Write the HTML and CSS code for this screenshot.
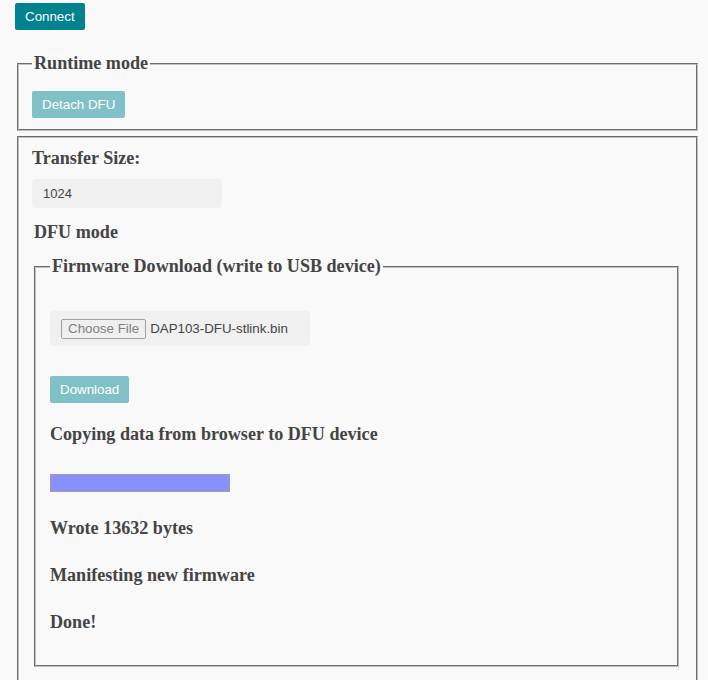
FILE: index.html
```html
<!DOCTYPE html>
<html>
<head>
<meta charset="utf-8">
<link rel="stylesheet" href="styles.css">
</head>
<body>
<button class="btn btn-primary">Connect</button>
<fieldset class="box box-runtime">
  <legend class="legend">Runtime mode</legend>
  <button class="btn btn-disabled">Detach DFU</button>
</fieldset>
<fieldset class="box box-main">
  <div class="label first">Transfer Size:</div>
  <input class="text-input" type="text" value="1024">
  <div class="label dfu">DFU mode</div>
  <fieldset class="box box-inner">
    <legend class="legend">Firmware Download (write to USB device)</legend>
    <div class="file-wrap">
      <span class="file-btn">Choose File</span>
      <span class="file-name">DAP103-DFU-stlink.bin</span>
    </div>
    <button class="btn btn-disabled btn-download">Download</button>
    <div class="label status">Copying data from browser to DFU device</div>
    <div class="progress"><div class="progress-fill"></div></div>
    <div class="label status2">Wrote 13632 bytes</div>
    <div class="label status3">Manifesting new firmware</div>
    <div class="label status3 last">Done!</div>
  </fieldset>
</fieldset>
</body>
</html>
```
FILE: styles.css
```css
html, body {
  background: #f9f9f9;
}
body {
  margin: 0;
  padding: 3px 10px 0 15px;
  font-family: "Liberation Serif", serif;
  color: #444;
}
.btn {
  display: block;
  height: 27px;
  padding: 0 10px;
  border: none;
  border-radius: 2px;
  font-family: "Liberation Sans", Arial, sans-serif;
  font-size: 13.333px;
  color: #fff;
  cursor: pointer;
}
.btn-primary {
  background: #00838f;
}
.btn-disabled {
  background: #7fc1c7;
}
.box {
  border: 2px groove #c0c0c0;
  margin: 0 0 0 2px;
  min-width: 0;
}
.legend {
  padding: 0 2px;
  font-weight: bold;
  font-size: 18.1px;
  line-height: 21px;
}
.box-runtime {
  margin-top: 23px;
  padding: 17px 13px 11px 13px;
}
.box-main {
  margin-top: 5px;
  padding: 10px 13px 30px 13px;
}
.label {
  font-weight: bold;
  font-size: 18.1px;
  line-height: 21px;
}
.label.dfu {
  margin-top: 14px;
  padding-left: 2px;
}
.text-input {
  display: block;
  margin-top: 10px;
  width: 190px;
  height: 29px;
  box-sizing: border-box;
  border: none;
  border-radius: 4px;
  background: #f0f0f0;
  padding: 0 11px;
  font-family: "Liberation Sans", Arial, sans-serif;
  font-size: 13px;
  color: #444;
  outline: none;
}
.box-inner {
  margin: 13px 4px 0 2px;
  padding: 34px 14px 32px 14px;
}
.file-wrap {
  display: flex;
  align-items: center;
  gap: 4px;
  width: 260px;
  height: 35px;
  box-sizing: border-box;
  padding: 0 11px;
  background: #f0f0f0;
  border-radius: 4px;
  font-family: "Liberation Sans", Arial, sans-serif;
  font-size: 13.333px;
}
.file-btn {
  display: inline-flex;
  align-items: center;
  height: 20px;
  box-sizing: border-box;
  padding: 0 6px;
  border: 1px solid #a0a0a0;
  border-radius: 2px;
  background: #efefef;
  color: #808080;
}
.file-name {
  color: #444;
}
.btn-download {
  margin-top: 30px;
}
.status {
  margin-top: 21px;
}
.progress {
  margin-top: 29px;
  width: 180px;
  height: 18px;
  box-sizing: border-box;
  border: 1px solid #a0a0a0;
  background: #eee;
}
.progress-fill {
  width: 100%;
  height: 100%;
  background: #8890ff;
}
.status2 {
  margin-top: 26px;
}
.status3 {
  margin-top: 26px;
}
```
